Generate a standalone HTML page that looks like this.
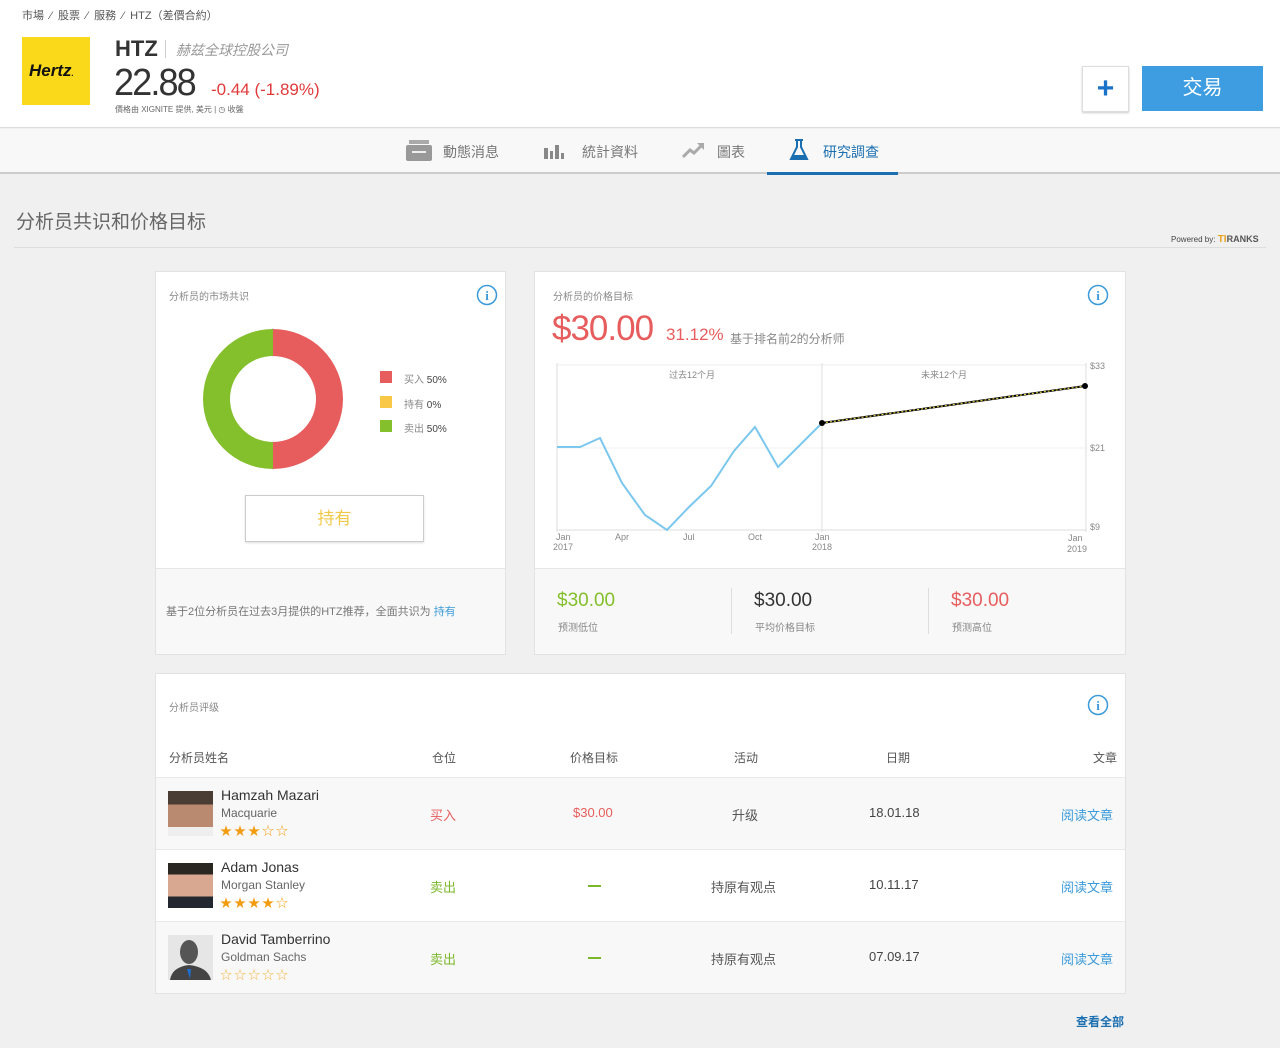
<!DOCTYPE html>
<html><head><meta charset="utf-8"><style>
*{margin:0;padding:0;box-sizing:border-box}
body{width:1280px;height:1048px;overflow:hidden;background:#f0f0f0;font-family:"Liberation Sans","Noto Sans CJK SC",sans-serif;position:relative;color:#333}
.a{position:absolute;white-space:nowrap}
.card{position:absolute;background:#fff;border:1px solid #e2e2e2}
.g{color:#888}
</style></head><body>
<div class="a" style="left:0;top:0;width:1280px;height:128px;background:#fff;border-bottom:1px solid #ddd"></div>
<div class="a g" style="left:22px;top:7px;font-size:11px;color:#555">市場 &nbsp;⁄&nbsp; 股票 &nbsp;⁄&nbsp; 服務 &nbsp;⁄&nbsp; HTZ（差價合約）</div>
<div class="a" style="left:22px;top:37px;width:68px;height:68px;background:#f9d91a"></div>
<div class="a" style="left:29px;top:61px;font-size:17px;font-weight:bold;font-style:italic;color:#111">Hertz<span style="font-size:8px">.</span></div>
<div class="a" style="left:115px;top:36px;font-size:22px;font-weight:bold;color:#333">HTZ</div>
<div class="a" style="left:165px;top:40px;width:1px;height:18px;background:#ccc"></div>
<div class="a" style="left:176px;top:40px;font-size:14px;font-style:italic;color:#999">赫兹全球控股公司</div>
<div class="a" style="left:114px;top:62px;font-size:38px;color:#333;letter-spacing:-2px;transform:scaleX(0.95);transform-origin:left">22.88</div>
<div class="a" style="left:211px;top:80px;font-size:17px;color:#e03a3a">-0.44 (-1.89%)</div>
<div class="a" style="left:115px;top:104px;font-size:8px;color:#666">價格由 XIGNITE 提供, 美元 | ◷ 收盤</div>
<div class="a" style="left:1082px;top:66px;width:47px;height:46px;background:#fff;border:1px solid #ddd;box-shadow:0 1px 2px #ccc;color:#1a73c8;font-size:30px;text-align:center;line-height:44px;font-weight:bold">+</div>
<div class="a" style="left:1142px;top:66px;width:121px;height:45px;background:#3d9de0;color:#fff;font-size:20px;text-align:center;line-height:45px">交易</div>
<div class="a" style="left:0;top:129px;width:1280px;height:45px;background:#f8f8f8;border-bottom:2px solid #ccc"></div>
<svg class="a" style="left:406px;top:140px" width="26" height="22"><rect x="3" y="0" width="20" height="4" fill="#aaa"/><rect x="0" y="5" width="26" height="16" rx="2" fill="#999"/><rect x="6" y="11" width="14" height="2" fill="#eee"/></svg>
<svg class="a" style="left:543px;top:142px" width="22" height="18"><rect x="1" y="6" width="4" height="11" fill="#888"/><rect x="7" y="9" width="3" height="8" fill="#888"/><rect x="12" y="3" width="4" height="14" fill="#888"/><rect x="18" y="11" width="3" height="6" fill="#888"/></svg>
<div class="a" style="left:443px;top:142px;font-size:14px;color:#777">動態消息</div>
<div class="a" style="left:582px;top:142px;font-size:14px;color:#777">統計資料</div>
<svg class="a" style="left:682px;top:141px" width="24" height="18"><path d="M1 16L8 9l4 3 9-9" fill="none" stroke="#aaa" stroke-width="3"/><path d="M15 2h7v7z" fill="#aaa"/></svg>
<div class="a" style="left:717px;top:142px;font-size:14px;color:#777">圖表</div>
<svg class="a" style="left:788px;top:138px" width="22" height="24"><path d="M7 2h8M9 2v7L3 21h16L13 9V2" fill="none" stroke="#1b6fb0" stroke-width="2"/><path d="M5 17h12l2 4H3z" fill="#1b6fb0"/></svg>
<div class="a" style="left:823px;top:142px;font-size:14px;color:#1b6fb0">研究調查</div>
<div class="a" style="left:767px;top:172px;width:131px;height:3px;background:#1b6fb0"></div>

<div class="a" style="left:16px;top:207px;font-size:19px;color:#666">分析员共识和价格目标</div>
<div class="a" style="left:1171px;top:234px;font-size:8px;color:#444">Powered by: <b style="color:#e9a21c;font-size:10px">TI</b><b style="color:#555;font-size:9px">RANKS</b></div>
<div class="a" style="left:14px;top:247px;width:1252px;height:1px;background:#ddd"></div>

<div class="card" style="left:155px;top:271px;width:351px;height:384px"></div>
<div class="a" style="left:156px;top:568px;width:349px;height:86px;background:#f8f8f8;border-top:1px solid #e6e6e6"></div>
<div class="a g" style="left:169px;top:288px;font-size:10px">分析员的市场共识</div>
<svg class="a" style="left:476px;top:284px" width="22" height="22"><circle cx="11" cy="11" r="9.5" fill="none" stroke="#3a9ad9" stroke-width="1.5"/><text x="11" y="16" font-size="13" font-weight="bold" text-anchor="middle" fill="#3a9ad9" font-family="Liberation Serif">i</text></svg>
<svg class="a" style="left:203px;top:329px" width="140" height="141"><path d="M70 0A70 70 0 0 1 70 140V113A43 43 0 0 0 70 27Z" fill="#e75d5d"/><path d="M70 0A70 70 0 0 0 70 140V113A43 43 0 0 1 70 27Z" fill="#84bf2c"/></svg>
<div class="a" style="left:380px;top:371px;width:12px;height:12px;background:#e75d5d"></div>
<div class="a" style="left:380px;top:396px;width:12px;height:12px;background:#f8c846"></div>
<div class="a" style="left:380px;top:420px;width:12px;height:12px;background:#84bf2c"></div>
<div class="a" style="left:404px;top:371px;font-size:10px;color:#888">买入 <span style="color:#444">50%</span></div>
<div class="a" style="left:404px;top:396px;font-size:10px;color:#888">持有 <span style="color:#444">0%</span></div>
<div class="a" style="left:404px;top:420px;font-size:10px;color:#888">卖出 <span style="color:#444">50%</span></div>
<div class="a" style="left:245px;top:495px;width:179px;height:47px;border:1px solid #ccc;box-shadow:0 1px 2px #ddd;text-align:center;line-height:46px;font-size:17px;color:#f2c84b">持有</div>
<div class="a" style="left:166px;top:603px;font-size:11px;color:#777">基于2位分析员在过去3月提供的HTZ推荐，全面共识为 <span style="color:#3a9ad9">持有</span></div>

<div class="card" style="left:534px;top:271px;width:592px;height:384px"></div>
<div class="a" style="left:535px;top:568px;width:590px;height:86px;background:#f8f8f8;border-top:1px solid #e6e6e6"></div>
<div class="a g" style="left:553px;top:288px;font-size:10px">分析员的价格目标</div>
<svg class="a" style="left:1087px;top:284px" width="22" height="22"><circle cx="11" cy="11" r="9.5" fill="none" stroke="#3a9ad9" stroke-width="1.5"/><text x="11" y="16" font-size="13" font-weight="bold" text-anchor="middle" fill="#3a9ad9" font-family="Liberation Serif">i</text></svg>
<div class="a" style="left:552px;top:309px;font-size:35px;color:#e75d5d;letter-spacing:-1px">$30.00</div>
<div class="a" style="left:666px;top:325px;font-size:17px;color:#e75d5d">31.12%</div>
<div class="a" style="left:730px;top:330px;font-size:12px;color:#888">基于排名前2的分析师</div>
<svg class="a" style="left:0;top:0" width="1280" height="560" font-family="Liberation Sans,Noto Sans CJK SC,sans-serif" font-size="9" fill="#888">
<line x1="557" y1="365" x2="1086" y2="365" stroke="#eee"/><line x1="557" y1="448" x2="1086" y2="448" stroke="#f2f2f2"/>
<line x1="557" y1="530" x2="1086" y2="530" stroke="#ddd"/>
<line x1="557" y1="363" x2="557" y2="532" stroke="#ddd"/><line x1="822" y1="363" x2="822" y2="532" stroke="#ddd"/><line x1="1086" y1="363" x2="1086" y2="532" stroke="#ddd"/>
<polyline points="557,447 580,447 600,438 622,483 645,515 667,530 689,507 711,486 734,451 755,427 778,467 800,445 822,423" fill="none" stroke="#7cc7ee" stroke-width="2"/>
<line x1="822" y1="423" x2="1085" y2="386" stroke="#000" stroke-width="2"/><line x1="822" y1="423" x2="1085" y2="386" stroke="#f1e04b" stroke-width="1" stroke-dasharray="2 2"/>
<circle cx="822" cy="423" r="3" fill="#000"/><circle cx="1085" cy="386" r="3" fill="#000"/>
<text x="669" y="378">过去12个月</text><text x="921" y="378">未来12个月</text>
<text x="1090" y="369">$33</text><text x="1090" y="451">$21</text><text x="1090" y="530">$9</text>
<text x="556" y="540">Jan</text><text x="553" y="550">2017</text><text x="615" y="540">Apr</text><text x="683" y="540">Jul</text><text x="748" y="540">Oct</text><text x="815" y="540">Jan</text><text x="812" y="550">2018</text><text x="1068" y="541">Jan</text><text x="1067" y="552">2019</text>
</svg>
<div class="a" style="left:557px;top:590px;font-size:19px;color:#84bf2c">$30.00</div>
<div class="a" style="left:558px;top:619px;font-size:10px;color:#888">预测低位</div>
<div class="a" style="left:731px;top:588px;width:1px;height:46px;background:#ddd"></div>
<div class="a" style="left:754px;top:590px;font-size:19px;color:#333">$30.00</div>
<div class="a" style="left:755px;top:619px;font-size:10px;color:#888">平均价格目标</div>
<div class="a" style="left:928px;top:588px;width:1px;height:46px;background:#ddd"></div>
<div class="a" style="left:951px;top:590px;font-size:19px;color:#e75d5d">$30.00</div>
<div class="a" style="left:952px;top:619px;font-size:10px;color:#888">预测高位</div>

<div class="card" style="left:155px;top:673px;width:971px;height:321px"></div>
<div class="a g" style="left:169px;top:699px;font-size:10px">分析员评级</div>
<svg class="a" style="left:1087px;top:694px" width="22" height="22"><circle cx="11" cy="11" r="9.5" fill="none" stroke="#3a9ad9" stroke-width="1.5"/><text x="11" y="16" font-size="13" font-weight="bold" text-anchor="middle" fill="#3a9ad9" font-family="Liberation Serif">i</text></svg>
<div class="a" style="left:169px;top:749px;font-size:12px;color:#555">分析员姓名</div>
<div class="a" style="left:432px;top:749px;font-size:12px;color:#555">仓位</div>
<div class="a" style="left:570px;top:749px;font-size:12px;color:#555">价格目标</div>
<div class="a" style="left:734px;top:749px;font-size:12px;color:#555">活动</div>
<div class="a" style="left:886px;top:749px;font-size:12px;color:#555">日期</div>
<div class="a" style="left:1093px;top:749px;font-size:12px;color:#555">文章</div>

<div class="a" style="left:156px;top:777px;width:969px;height:72px;background:#f8f8f8;border-top:1px solid #e8e8e8"></div>
<div class="a" style="left:156px;top:849px;width:969px;height:72px;background:#fff;border-top:1px solid #e8e8e8"></div>
<div class="a" style="left:156px;top:921px;width:969px;height:72px;background:#f8f8f8;border-top:1px solid #e8e8e8"></div>

<div class="a" style="left:168px;top:791px;width:45px;height:45px;background:linear-gradient(#4a3d33 0 30%,#b98a6f 30% 80%,#eee 80%)"></div>
<div class="a" style="left:168px;top:863px;width:45px;height:45px;background:linear-gradient(#2a2622 0 25%,#d8a890 25% 75%,#23272f 75%)"></div>
<svg class="a" style="left:168px;top:935px" width="45" height="45"><rect width="45" height="45" fill="#e6e6e6"/><ellipse cx="21" cy="17" rx="9" ry="12" fill="#555"/><path d="M2 45Q4 32 21 30Q40 32 43 45Z" fill="#444"/><path d="M19 34h4l-1 10z" fill="#1f6ed4"/></svg>

<div class="a" style="left:221px;top:787px;font-size:14px;color:#333">Hamzah Mazari</div>
<div class="a" style="left:221px;top:806px;font-size:12px;color:#666">Macquarie</div>
<div class="a" style="left:220px;top:822px;font-size:12px;color:#f39c12;letter-spacing:2px">★★★☆☆</div>
<div class="a" style="left:221px;top:859px;font-size:14px;color:#333">Adam Jonas</div>
<div class="a" style="left:221px;top:878px;font-size:12px;color:#666">Morgan Stanley</div>
<div class="a" style="left:220px;top:894px;font-size:12px;color:#f39c12;letter-spacing:2px">★★★★☆</div>
<div class="a" style="left:221px;top:931px;font-size:14px;color:#333">David Tamberrino</div>
<div class="a" style="left:221px;top:950px;font-size:12px;color:#666">Goldman Sachs</div>
<div class="a" style="left:220px;top:966px;font-size:12px;color:#f3b542;letter-spacing:2px">☆☆☆☆☆</div>

<div class="a" style="left:430px;top:805px;font-size:13px;color:#e75d5d">买入</div>
<div class="a" style="left:430px;top:877px;font-size:13px;color:#7cb82b">卖出</div>
<div class="a" style="left:430px;top:949px;font-size:13px;color:#7cb82b">卖出</div>
<div class="a" style="left:573px;top:805px;font-size:13px;color:#e75d5d">$30.00</div>
<div class="a" style="left:588px;top:885px;width:13px;height:2px;background:#7cb82b"></div>
<div class="a" style="left:588px;top:957px;width:13px;height:2px;background:#7cb82b"></div>
<div class="a" style="left:732px;top:805px;font-size:13px;color:#555">升级</div>
<div class="a" style="left:711px;top:877px;font-size:13px;color:#555">持原有观点</div>
<div class="a" style="left:711px;top:949px;font-size:13px;color:#555">持原有观点</div>
<div class="a" style="left:869px;top:805px;font-size:13px;color:#444">18.01.18</div>
<div class="a" style="left:869px;top:877px;font-size:13px;color:#444">10.11.17</div>
<div class="a" style="left:869px;top:949px;font-size:13px;color:#444">07.09.17</div>
<div class="a" style="left:1061px;top:805px;font-size:13px;color:#3a9ad9">阅读文章</div>
<div class="a" style="left:1061px;top:877px;font-size:13px;color:#3a9ad9">阅读文章</div>
<div class="a" style="left:1061px;top:949px;font-size:13px;color:#3a9ad9">阅读文章</div>
<div class="a" style="left:1076px;top:1013px;font-size:12px;color:#1b6fb0;font-weight:bold">查看全部</div>
</body></html>
